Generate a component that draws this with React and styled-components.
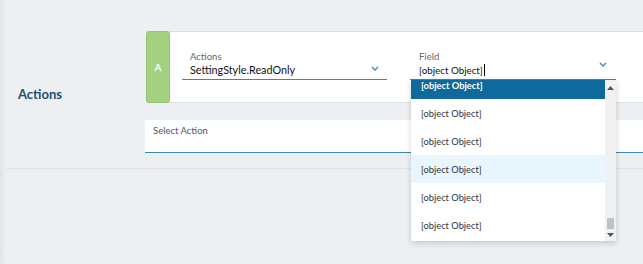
import React from "react";
import styled, { createGlobalStyle } from "styled-components";

const Global = createGlobalStyle`
  html, body { margin: 0; padding: 0; }
  body {
    background: #edf0f3;
    font-family: Lato, "Open Sans", sans-serif;
    overflow: hidden;
    width: 643px;
    height: 264px;
  }
  * { box-sizing: border-box; }
`;

const Page = styled.div`
  display: flex;
  width: 643px;
  height: 264px;
  position: relative;
  overflow: hidden;
`;

const EdgeShade = styled.div`
  width: 6px;
  flex: none;
  background: linear-gradient(to right, #dfe2e6, #e9ecef 70%, #edf0f3);
`;

const Main = styled.div`
  flex: 1;
  min-width: 0;
`;

const Section = styled.div`
  display: flex;
  height: 169px;
  border-bottom: 1px solid #dde2e6;
`;

const SectionLabel = styled.div`
  width: 139px;
  flex: none;
  padding-left: 12px;
  display: flex;
  align-items: center;
  padding-top: 20px;
  font-size: 13px;
  font-weight: 700;
  color: #1c4f70;
`;

const SectionBody = styled.div`
  flex: 1;
  min-width: 0;
  padding-top: 31px;
  display: flex;
  flex-direction: column;
  gap: 17px;
`;

const Card = styled.div`
  display: flex;
  height: 72px;
  width: 520px;
  background: #fff;
  border: 1px solid #dcdfe3;
  border-left: none;
  margin-left: 1px;
`;

const Badge = styled.div`
  width: 24px;
  margin-top: -1px;
  margin-bottom: -1px;
  flex: none;
  background: #a3d17f;
  border: 1px solid #93c46f;
  border-radius: 3px;
  color: #fff;
  font-size: 10px;
  font-weight: 700;
  display: flex;
  align-items: center;
  justify-content: center;
`;

const Fields = styled.div`
  display: flex;
  gap: 23px;
  padding-left: 12px;
  padding-top: 19px;
`;

const FieldBox = styled.div`
  width: ${(p) => p.$w}px;
  height: 29px;
  border-bottom: 1.5px solid #3a87b4;
  padding-left: ${(p) => p.$pl}px;
  position: relative;
`;

const FieldLabel = styled.div`
  font-size: 9.5px;
  color: #666;
  line-height: 12px;
`;

const FieldValue = styled.div`
  font-size: ${(p) => p.$fs}px;
  color: #111;
  line-height: 14px;
  display: flex;
  align-items: center;
`;

const Caret = styled.span`
  display: inline-block;
  width: 1px;
  height: 12px;
  background: #000;
  margin-left: 1px;
`;

const Chevron = styled.svg`
  position: absolute;
  right: ${(p) => p.$r}px;
  top: ${(p) => p.$t}px;
`;

const SelectAction = styled.div`
  height: 33px;
  width: 520px;
  background: #fff;
  border-bottom: 1.5px solid #3a87b4;
  padding: 5px 0 0 8px;
  font-size: 9.5px;
  color: #555;
`;

const Dropdown = styled.div`
  position: absolute;
  left: 411px;
  top: 80px;
  width: 205px;
  height: 161px;
  background: #fff;
  box-shadow: 0 2px 6px rgba(0, 0, 0, 0.18);
  display: flex;
  overflow: hidden;
`;

const List = styled.div`
  flex: 1;
  overflow: hidden;
`;

const Items = styled.div`
  margin-top: -9px;
`;

const Item = styled.div`
  height: 28px;
  padding-left: 10px;
  display: flex;
  align-items: center;
  font-size: 9.3px;
  color: ${(p) => (p.$selected ? "#fff" : "#333")};
  background: ${(p) =>
    p.$selected ? "#0e6a9c" : p.$hover ? "#eaf6fd" : "#fff"};
  font-weight: ${(p) => (p.$selected ? 700 : 400)};
`;

const ScrollTrack = styled.div`
  width: 11px;
  flex: none;
  background: #f1f1f1;
  display: flex;
  flex-direction: column;
  align-items: center;
  justify-content: space-between;
  padding: 6px 0 4px;
`;

const ThumbArea = styled.div`
  display: flex;
  flex-direction: column;
  align-items: center;
  gap: 4px;
`;

const Thumb = styled.div`
  width: 7px;
  height: 11px;
  background: #c1c1c1;
`;

const chev = (
  <path d="M1 1 L4 4 L7 1" fill="none" stroke="#4a86c2" strokeWidth="1.4" />
);

export default function App() {
  const items = [{ sel: true }, {}, {}, { hover: true }, {}, {}];
  return (
    <>
      <Global />
      <Page>
        <EdgeShade />
        <Main>
          <Section>
            <SectionLabel>Actions</SectionLabel>
            <SectionBody>
              <Card>
                <Badge>A</Badge>
                <Fields>
                  <FieldBox $w={205} $pl={8}>
                    <FieldLabel>Actions</FieldLabel>
                    <FieldValue $fs={10.8}>SettingStyle.ReadOnly</FieldValue>
                    <Chevron $r={8} $t={15} width="8" height="5" viewBox="0 0 8 5">
                      {chev}
                    </Chevron>
                  </FieldBox>
                  <FieldBox $w={206} $pl={9}>
                    <FieldLabel>Field</FieldLabel>
                    <FieldValue $fs={9.8}>
                      [object Object]
                      <Caret />
                    </FieldValue>
                    <Chevron $r={9} $t={11} width="8" height="5" viewBox="0 0 8 5">
                      {chev}
                    </Chevron>
                  </FieldBox>
                </Fields>
              </Card>
              <SelectAction>Select Action</SelectAction>
            </SectionBody>
          </Section>
        </Main>
        <Dropdown>
          <List>
            <Items>
              {items.map((it, i) => (
                <Item key={i} $selected={it.sel} $hover={it.hover}>
                  [object Object]
                </Item>
              ))}
            </Items>
          </List>
          <ScrollTrack>
            <svg width="7" height="4" viewBox="0 0 7 4">
              <path d="M0 4 L3.5 0 L7 4 Z" fill="#555" />
            </svg>
            <ThumbArea>
              <Thumb />
              <svg width="7" height="4" viewBox="0 0 7 4">
                <path d="M0 0 L3.5 4 L7 0 Z" fill="#555" />
              </svg>
            </ThumbArea>
          </ScrollTrack>
        </Dropdown>
      </Page>
    </>
  );
}
